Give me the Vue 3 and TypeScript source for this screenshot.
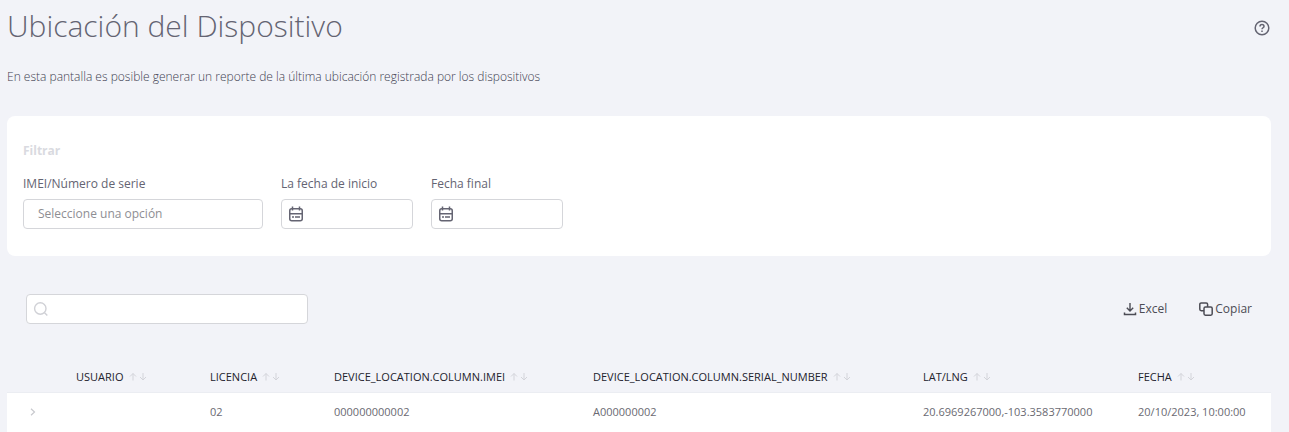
<script setup lang="ts">
import { ref } from 'vue'

interface Column {
  key: string
  label: string
  cls: string
}

interface DeviceRow {
  [key: string]: string
}

const columns: Column[] = [
  { key: 'user', label: 'USUARIO', cls: 'c-user' },
  { key: 'license', label: 'LICENCIA', cls: 'c-license' },
  { key: 'imei', label: 'DEVICE_LOCATION.COLUMN.IMEI', cls: 'c-imei' },
  { key: 'serial', label: 'DEVICE_LOCATION.COLUMN.SERIAL_NUMBER', cls: 'c-serial' },
  { key: 'latlng', label: 'LAT/LNG', cls: 'c-latlng' },
  { key: 'date', label: 'FECHA', cls: 'c-date' },
]

const rows: DeviceRow[] = [
  {
    user: '',
    license: '02',
    imei: '000000000002',
    serial: 'A000000002',
    latlng: '20.6969267000,-103.3583770000',
    date: '20/10/2023, 10:00:00',
  },
]

const dates = [
  { id: 'start-date', label: 'La fecha de inicio' },
  { id: 'end-date', label: 'Fecha final' },
]

const device = ref('')
const search = ref('')
</script>

<template>
  <main class="page">
    <header class="head">
      <h1>Ubicación del Dispositivo</h1>
      <button type="button" class="help" aria-label="Ayuda">
        <svg width="16" height="16" viewBox="0 0 16 16" fill="none" stroke="currentColor">
          <circle cx="8" cy="8" r="6.8" stroke-width="1.5" />
          <path d="M6 6.5C6 5.2 6.8 4.6 8 4.6s2 .7 2 1.8c0 1.3-2 1.4-2 2.9" stroke-width="1.5" />
          <path d="M8 10.6v1.5" stroke-width="1.5" />
        </svg>
      </button>
    </header>
    <p class="intro">
      En esta pantalla es posible generar un reporte de la última ubicación registrada por los dispositivos
    </p>

    <section class="card">
      <h2>Filtrar</h2>
      <form class="filters" @submit.prevent>
        <div class="field">
          <label for="device">IMEI/Número de serie</label>
          <select id="device" v-model="device" class="box select">
            <option value="">Seleccione una opción</option>
            <option v-for="row in rows" :key="row.imei" :value="row.imei">{{ row.imei }}</option>
          </select>
        </div>
        <div v-for="d in dates" :key="d.id" class="field">
          <label :for="d.id">{{ d.label }}</label>
          <div class="box date">
            <svg width="16" height="16" viewBox="0 0 16 16" fill="none" stroke="currentColor">
              <rect x="1.75" y="2.75" width="12.5" height="12" rx="2" stroke-width="1.5" />
              <path d="M4.5 .5v4M11.5 .5v4M2 7.7h12" stroke-width="1.5" />
              <path d="M4 11h2M7 11h5" stroke-width="1.5" />
            </svg>
            <input :id="d.id" type="text" />
          </div>
        </div>
      </form>
    </section>

    <div class="toolbar">
      <div class="box search">
        <svg width="16" height="16" viewBox="0 0 16 16" fill="none" stroke="currentColor">
          <circle cx="7.3" cy="7.5" r="5.7" stroke-width="1.4" />
          <path d="M11.3 11.5l3 3" stroke-width="1.4" />
        </svg>
        <input v-model="search" type="text" aria-label="Buscar" />
      </div>
      <div class="actions">
        <button type="button">
          <svg width="14" height="14" viewBox="0 0 14 14" fill="none" stroke="currentColor">
            <path d="M7 1v8M3.8 5.8L7 9l3.2-3.2" stroke-width="1.4" />
            <path d="M1.5 10.5v2h11v-2" stroke-width="1.5" />
          </svg>
          Excel
        </button>
        <button type="button">
          <svg width="14" height="14" viewBox="0 0 14 14" fill="none" stroke="currentColor">
            <path d="M5 8.7H2.2A1.4 1.4 0 0 1 .8 7.3V2.3A1.4 1.4 0 0 1 2.2.9h5a1.4 1.4 0 0 1 1.4 1.4V5" stroke-width="1.5" />
            <rect x="5" y="5" width="8.2" height="8.2" rx="1.4" stroke-width="1.5" />
          </svg>
          Copiar
        </button>
      </div>
    </div>

    <table>
      <thead>
        <tr>
          <th class="c-expand"></th>
          <th v-for="col in columns" :key="col.key" :class="col.cls" scope="col">
            <span class="sort">
              {{ col.label }}
              <svg width="18" height="10" viewBox="0 0 18 10" fill="none" stroke="currentColor">
                <path d="M4 8.5V1.5M1 4.5l3-3 3 3M14 1v7M11 5l3 3 3-3" />
              </svg>
            </span>
          </th>
        </tr>
      </thead>
      <tbody>
        <tr v-for="row in rows" :key="row.imei">
          <td class="c-expand">
            <button type="button" aria-label="Expandir">
              <svg width="8" height="8" viewBox="0 0 8 8" fill="none" stroke="currentColor">
                <path d="M2 .8L5.5 4 2 7.2" stroke-width="1.2" />
              </svg>
            </button>
          </td>
          <td v-for="col in columns" :key="col.key">{{ row[col.key] }}</td>
        </tr>
      </tbody>
    </table>
  </main>
</template>

<style>
body {
  background: #f2f3f8;
}
</style>

<style scoped>
.page {
  padding: 8px 18px 0 7px;
  font-family: 'Open Sans', 'Noto Sans', sans-serif;
  font-size: 12px;
  line-height: 16px;
  color: #646472;
}
.page * {
  box-sizing: border-box;
}
svg {
  flex: none;
  display: block;
}
button {
  padding: 0;
  border: 0;
  background: none;
  font: inherit;
  color: inherit;
}
.head {
  display: flex;
  justify-content: space-between;
  align-items: center;
}
h1 {
  margin: 0;
  font-size: 30px;
  line-height: 36px;
  font-weight: 300;
  color: #646472;
}
.help {
  margin-right: 1px;
  padding-top: 4px;
}
.intro {
  margin: 25px 0 31px;
  font-weight: 300;
  color: #3e3e50;
}
.card {
  padding: 27px 16px;
  border-radius: 8px;
  background: #fff;
}
h2 {
  margin: 0 0 17px;
  font-size: 12px;
  line-height: 16px;
  font-weight: 700;
  color: #d9dae0;
}
.filters {
  display: flex;
  gap: 18px;
}
.field {
  display: flex;
  flex-direction: column;
  gap: 7px;
  width: 132px;
}
.field:first-child {
  width: 240px;
}
.box {
  display: flex;
  align-items: center;
  width: 100%;
  height: 30px;
  padding: 0 6px;
  border: 1px solid #d5d6da;
  border-radius: 4px;
  background: #fff;
}
.select {
  appearance: none;
  padding: 0 14px;
  font: inherit;
  color: #8e8e93;
}
.box input {
  flex: 1;
  min-width: 0;
  border: 0;
  outline: 0;
  background: none;
  font: inherit;
  color: inherit;
}
.toolbar {
  display: flex;
  justify-content: space-between;
  align-items: center;
  padding: 38px 19px 36px;
}
.search {
  width: 282px;
}
.search svg {
  color: #d0d1d6;
}
.actions {
  display: flex;
  gap: 32px;
  color: #4c4c55;
}
.actions button {
  display: flex;
  align-items: center;
  gap: 2px;
}
table {
  width: 100%;
  table-layout: fixed;
  border-collapse: collapse;
  font-size: 11px;
}
th,
td {
  padding: 0 8px;
  text-align: left;
  white-space: nowrap;
}
th {
  height: 32px;
  padding-top: 2px;
  font-weight: 400;
  color: #22222c;
}
tbody tr {
  height: 40px;
  background: #fff;
  border-top: 1px solid #ebedf2;
}
td {
  color: #6a6a72;
}
.c-expand {
  width: 4.83%;
  padding-left: 22px;
  color: #c8c9ce;
}
.c-expand button {
  display: block;
}
.c-user {
  width: 10.6%;
}
.c-license {
  width: 9.81%;
}
.c-imei {
  width: 20.49%;
}
.c-serial {
  width: 26.11%;
}
.c-latlng {
  width: 17.01%;
}
.c-date {
  width: 11.15%;
}
.sort {
  display: flex;
  align-items: center;
  gap: 5px;
}
.sort svg {
  color: #d3d4da;
}
</style>
